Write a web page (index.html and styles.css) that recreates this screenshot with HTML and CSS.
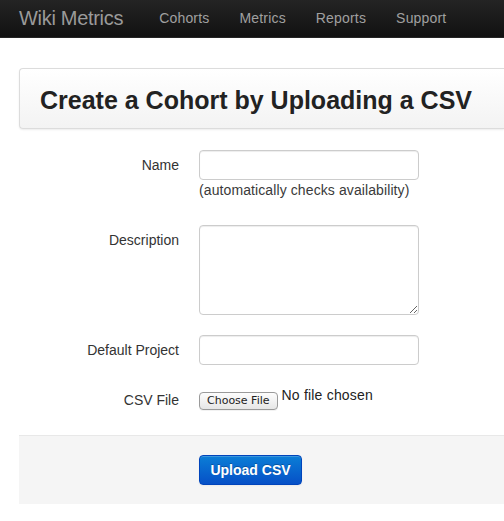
FILE: index.html
```html
<!DOCTYPE html>
<html>
<head>
<meta charset="utf-8">
<link rel="stylesheet" href="styles.css">
</head>
<body>
<div class="navbar">
  <a class="brand" href="#">Wiki Metrics</a>
  <ul class="nav">
    <li><a href="#">Cohorts</a></li>
    <li><a href="#">Metrics</a></li>
    <li><a href="#">Reports</a></li>
    <li><a href="#">Support</a></li>
  </ul>
</div>
<div class="container">
  <div class="page-header">
    <h2>Create a Cohort by Uploading a CSV</h2>
  </div>
  <form class="form-horizontal">
    <div class="control-group">
      <label class="control-label">Name</label>
      <div class="controls">
        <input type="text" class="text-input">
        <span class="help-block">(automatically checks availability)</span>
      </div>
    </div>
    <div class="control-group">
      <label class="control-label">Description</label>
      <div class="controls">
        <textarea class="text-area"></textarea>
      </div>
    </div>
    <div class="control-group">
      <label class="control-label">Default Project</label>
      <div class="controls">
        <input type="text" class="text-input">
      </div>
    </div>
    <div class="control-group file-group">
      <label class="control-label">CSV File</label>
      <div class="controls file-controls">
        <span class="file-button">Choose File</span>
        <span class="file-name">No file chosen</span>
      </div>
    </div>
    <div class="form-actions">
      <button type="button" class="btn-primary">Upload CSV</button>
    </div>
  </form>
</div>
</body>
</html>
```

FILE: styles.css
```css
html, body {
  margin: 0;
  padding: 0;
  background: #fff;
  font-family: "Liberation Sans", Arial, Helvetica, sans-serif;
  font-size: 14px;
  line-height: 20px;
  color: #333;
  overflow: hidden;
}

.navbar {
  height: 36px;
  display: flex;
  align-items: center;
  background: linear-gradient(to bottom, #242424, #111);
  border-bottom: 1px solid #252525;
  padding-left: 19px;
  padding-bottom: 1px;
  box-sizing: content-box;
}

.brand {
  font-size: 20px;
  line-height: 20px;
  color: #9a9a9a;
  text-decoration: none;
  padding-right: 21px;
  letter-spacing: -0.3px;
}

.nav {
  list-style: none;
  margin: 0;
  padding: 0;
  display: flex;
}

.nav a {
  display: block;
  padding: 0 15px;
  color: #a0a0a0;
  text-decoration: none;
  font-size: 14px;
  letter-spacing: 0.18px;
}

.container {
  padding-left: 19px;
}

.page-header {
  margin-top: 30px;
  height: 59px;
  display: flex;
  align-items: center;
  padding-left: 20px;
  border: 1px solid #dcdcdc;
  border-right: none;
  border-radius: 4px 0 0 4px;
  background: linear-gradient(to bottom, #fff, #f3f3f3);
  box-shadow: 0 1px 2px rgba(0, 0, 0, 0.08);
}

.page-header h2 {
  margin: 0;
  font-size: 25px;
  line-height: 30px;
  font-weight: bold;
  color: #222;
  padding-top: 2px;
}

.form-horizontal {
  margin-top: 21px;
}

.control-group {
  display: flex;
  margin-bottom: 20px;
}

.control-group:first-child {
  margin-bottom: 25px;
}

.control-group.file-group {
  margin-bottom: 25px;
}

.control-label {
  width: 160px;
  flex: none;
  text-align: right;
  padding-top: 5px;
  margin-right: 20px;
  color: #333;
}

.controls {
  display: flex;
  flex-direction: column;
}

.text-input {
  box-sizing: border-box;
  width: 220px;
  height: 30px;
  margin: 0;
  padding: 4px 6px;
  font-family: inherit;
  font-size: 14px;
  border: 1px solid #ccc;
  border-radius: 4px;
  box-shadow: inset 0 1px 1px rgba(0, 0, 0, 0.075);
  background: #fff;
}

.help-block {
  display: block;
  color: #3a3a3a;
  line-height: 20px;
  margin-top: 0;
  letter-spacing: 0.1px;
}

.text-area {
  box-sizing: border-box;
  width: 220px;
  height: 90px;
  margin: 0;
  padding: 4px 6px;
  font-family: inherit;
  font-size: 14px;
  border: 1px solid #ccc;
  border-radius: 4px;
  box-shadow: inset 0 1px 1px rgba(0, 0, 0, 0.075);
  background: #fff;
}

.file-controls {
  flex-direction: row;
  align-items: flex-start;
  padding-top: 2px;
}

.file-button {
  box-sizing: border-box;
  margin-top: 5px;
  height: 18px;
  padding: 0 7px;
  font-family: "DejaVu Sans", sans-serif;
  font-size: 11px;
  line-height: 16px;
  color: #222;
  border: 1px solid #9a9a9a;
  border-radius: 4px;
  background: linear-gradient(to bottom, #fdfdfd, #e6e6e6);
  box-shadow: 0 1px 0 rgba(0, 0, 0, 0.05);
}

.file-name {
  margin-left: 4px;
  line-height: 16px;
  color: #222;
  letter-spacing: 0.2px;
}

.form-actions {
  margin-top: 0;
  padding: 19px 20px 19px 180px;
  border-top: 1px solid #e8e8e8;
  background: #f5f5f5;
}

.btn-primary {
  box-sizing: border-box;
  height: 30px;
  width: 103px;
  padding: 4px 0;
  font-family: inherit;
  font-size: 14px;
  line-height: 20px;
  font-weight: bold;
  color: #fff;
  border: 1px solid #0044bb;
  border-radius: 4px;
  background: linear-gradient(to bottom, #0b7ed6, #0650c7);
  box-shadow: inset 0 1px 0 rgba(255, 255, 255, 0.2), 0 1px 2px rgba(0, 0, 0, 0.05);
  text-shadow: 0 -1px 0 rgba(0, 0, 0, 0.25);
  cursor: pointer;
}
```
